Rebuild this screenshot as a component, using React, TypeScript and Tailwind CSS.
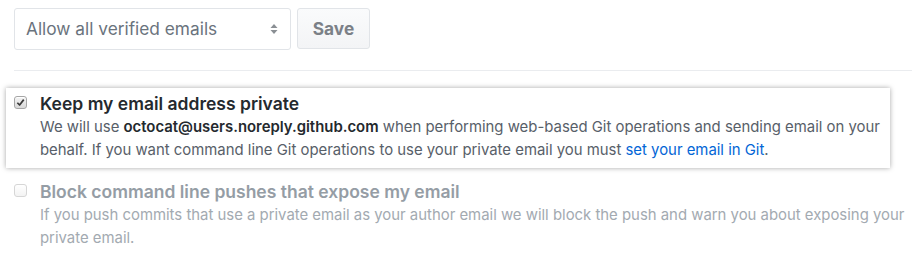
function SelectArrows() {
  return (
    <svg width="8" height="12" viewBox="0 0 8 12" className="shrink-0">
      <path d="M4 1 L7.5 5 H0.5 Z" fill="#8a8f94" />
      <path d="M4 11 L7.5 7 H0.5 Z" fill="#8a8f94" />
    </svg>
  )
}

function MacCheckbox({ checked, disabled }: { checked?: boolean; disabled?: boolean }) {
  return (
    <span
      className={
        'mt-[4px] w-[13px] h-[13px] rounded-[3px] border flex items-center justify-center shrink-0 ' +
        (disabled
          ? 'border-[#d6d6d6] bg-gradient-to-b from-white to-[#f3f3f3]'
          : 'border-[#a6a6a6] bg-gradient-to-b from-[#f4f4f4] to-[#d9d9d9] shadow-[inset_0_1px_0_#fff]')
      }
    >
      {checked && (
        <svg width="9" height="9" viewBox="0 0 10 10">
          <path d="M1.5 5.3 L4 7.8 L8.6 1.8" fill="none" stroke="#3a3a3a" strokeWidth="1.9" strokeLinejoin="round" />
        </svg>
      )}
    </span>
  )
}

export default function App() {
  return (
    <div className="w-[912px] h-[257px] bg-white overflow-hidden font-['Inter','Liberation_Sans',sans-serif]">
      <div className="pl-[14px] pt-[8px]">
        {/* Email preference select + save */}
        <div className="flex gap-[6px]">
          <div className="w-[277px] h-[42px] border border-[#e1e4e8] rounded-[3px] flex items-center justify-between pl-[11px] pr-[12px]">
            <span className="text-[17.3px] text-[#6a737d]">Allow all verified emails</span>
            <SelectArrows />
          </div>
          <button className="w-[73px] h-[41px] border border-[#e1e4e8] rounded-[3px] bg-gradient-to-b from-[#fafbfc] to-[#f3f4f6] text-[17.3px] font-bold text-[#7b8087]">
            Save
          </button>
        </div>

        <div className="mt-[20px] border-t border-[#eaecef]" />

        {/* Highlighted option */}
        <div className="mt-[17px] ml-[-8px] w-[884px] bg-white shadow-[0_0_5px_rgba(0,0,0,0.35)] px-[8px] pt-[4px] pb-[6px]">
          <div className="flex gap-[13px]">
            <MacCheckbox checked />
            <div>
              <div className="text-[17.5px] font-semibold text-[#24292e] leading-[23px]">Keep my email address private</div>
              <p className="text-[14.9px] text-[#586069] leading-[23px] mt-[1px]">
                We will use <strong className="font-semibold text-[#24292e]">octocat@users.noreply.github.com</strong> when performing
                web-based Git operations and sending email on your behalf. If you want command line Git operations to use
                your private email you must <a className="text-[#0366d6]">set your email in Git</a>.
              </p>
            </div>
          </div>
        </div>

        {/* Disabled option */}
        <div className="mt-[12px] flex gap-[13px] w-[898px]">
          <MacCheckbox disabled />
          <div>
            <div className="text-[17.5px] font-semibold text-[#959da5] leading-[23px]">Block command line pushes that expose my email</div>
            <p className="text-[14.9px] text-[#a3aab1] leading-[23px] mt-[1px]">
              If you push commits that use a private email as your author email we will block the push and warn you about
              exposing your private email.
            </p>
          </div>
        </div>
      </div>
    </div>
  )
}
